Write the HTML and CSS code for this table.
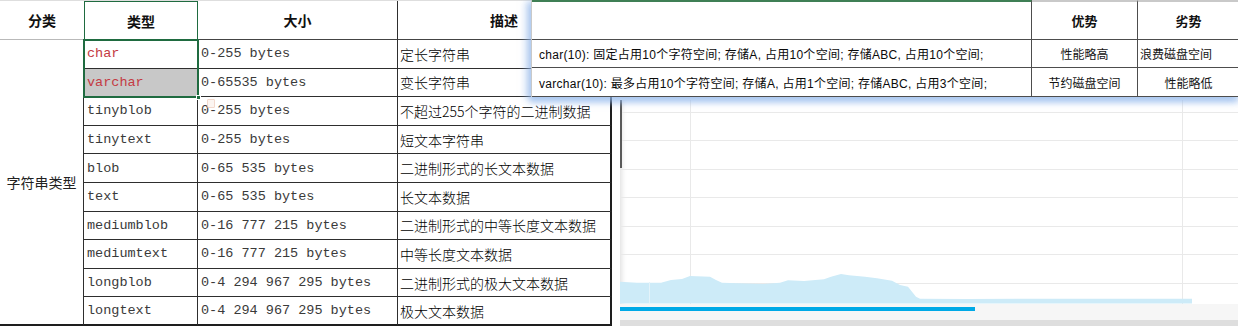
FILE: index.html
```html
<!DOCTYPE html>
<html lang="zh-CN">
<head>
<meta charset="utf-8">
<title>字符串类型</title>
<link rel="stylesheet" href="styles.css">
</head>
<body>
<div class="desk">
  <div class="sheet">
    <div class="c h h-cat">分类</div>
    <div class="c h h-type">类型</div>
    <div class="c h">大小</div>
    <div class="c h last">描述</div>

    <div class="c cat">字符串类型</div>

    <div class="c mono red">char</div><div class="c mono">0-255 bytes</div><div class="c cn last">定长字符串</div>
    <div class="c mono red picked">varchar</div><div class="c mono">0-65535 bytes</div><div class="c cn last">变长字符串</div>
    <div class="c mono">tinyblob</div><div class="c mono paste">0-255 bytes<span class="clip"></span></div><div class="c cn last">不超过255个字符的二进制数据</div>
    <div class="c mono">tinytext</div><div class="c mono">0-255 bytes</div><div class="c cn last">短文本字符串</div>
    <div class="c mono">blob</div><div class="c mono">0-65 535 bytes</div><div class="c cn last">二进制形式的长文本数据</div>
    <div class="c mono">text</div><div class="c mono">0-65 535 bytes</div><div class="c cn last">长文本数据</div>
    <div class="c mono">mediumblob</div><div class="c mono">0-16 777 215 bytes</div><div class="c cn last">二进制形式的中等长度文本数据</div>
    <div class="c mono">mediumtext</div><div class="c mono">0-16 777 215 bytes</div><div class="c cn last">中等长度文本数据</div>
    <div class="c mono">longblob</div><div class="c mono">0-4 294 967 295 bytes</div><div class="c cn last">二进制形式的极大文本数据</div>
    <div class="c mono">longtext</div><div class="c mono">0-4 294 967 295 bytes</div><div class="c cn last">极大文本数据</div>

    <div class="sel"><span class="handle"></span></div>
  </div>

  <div class="side">
    <div class="player">
      <svg class="frame" width="618" height="226" viewBox="0 0 618 226">
        <g stroke="#e9e9e9" stroke-width="1">
          <line x1="0" y1="12.5" x2="618" y2="12.5"/>
          <line x1="0" y1="40.5" x2="618" y2="40.5"/>
          <line x1="0" y1="69.5" x2="618" y2="69.5"/>
          <line x1="0" y1="97.5" x2="618" y2="97.5"/>
          <line x1="0" y1="126.5" x2="618" y2="126.5"/>
          <line x1="0" y1="154.5" x2="618" y2="154.5"/>
          <line x1="0" y1="183.5" x2="618" y2="183.5"/>
          <line x1="0" y1="212.5" x2="618" y2="212.5"/>
          <line x1="70.5" y1="0" x2="70.5" y2="226"/>
          <line x1="562.5" y1="0" x2="562.5" y2="226"/>
        </g>
        <rect x="0" y="204" width="618" height="16" fill="#f6f6f6"/>
        <polygon fill="#cdebf8" points="0,181.7 17,182.7 41,182.7 51,180 62,179 70,176 90,176.7 96,180 102,182.7 143,184 160,182.7 168,180.3 184,181 204,179.3 211,176.7 221,174 229,175.3 245,176.7 257,178.3 272,180.7 280,185 288,186.7 296,196.7 300,198.7 347,199 429,198.7 572,198.7 572,203.5 0,203.5"/>
        <line x1="29.5" y1="182" x2="29.5" y2="203" stroke="#e4f3fa" stroke-width="1"/>
        <rect x="0" y="207" width="355" height="4" fill="#00a9e6"/>
        <rect x="0" y="220" width="618" height="6" fill="#dedede"/>
        <rect x="0" y="0" width="2" height="68" fill="#5a5a5a"/>
      </svg>
    </div>
  </div>

  <div class="popup">
    <div class="p ph first"></div>
    <div class="p ph mid">优势</div>
    <div class="p ph end">劣势</div>

    <div class="p first txt">char(10): 固定占用10个字符空间; 存储A, 占用10个空间; 存储ABC, 占用10个空间;</div>
    <div class="p mid">性能略高</div>
    <div class="p end left">浪费磁盘空间</div>

    <div class="p first txt">varchar(10): 最多占用10个字符空间; 存储A, 占用1个空间; 存储ABC, 占用3个空间;</div>
    <div class="p mid">节约磁盘空间</div>
    <div class="p end">性能略低</div>
  </div>
</div>
</body>
</html>
```

FILE: styles.css
```css
* { box-sizing: border-box; }

html, body {
  margin: 0;
  padding: 0;
  background: #ffffff;
}

.desk {
  position: relative;
  width: 1238px;
  height: 326px;
  overflow: hidden;
  display: flex;
  background: #ffffff;
  font-family: "Noto Sans CJK SC", "Liberation Sans", sans-serif;
  color: #1e1e1e;
}

/* ---------- left spreadsheet ---------- */
.sheet {
  position: relative;
  flex: 0 0 612px;
  width: 612px;
  height: 326px;
  display: grid;
  grid-template-columns: 84px 114px 200px 214px;
  grid-template-rows: 39px repeat(10, 28.6px);
  border-top: 1px solid #dedede;
  align-content: start;
}

.c {
  display: flex;
  align-items: center;
  padding-left: 3px;
  border-right: 1px solid #2e2e2e;
  border-bottom: 1px solid #2e2e2e;
  font-size: 14px;
  white-space: nowrap;
  overflow: hidden;
}

.c.last { border-right: 2px solid #1e1e1e; }

.h {
  justify-content: center;
  padding-left: 0;
  font-weight: 700;
  font-size: 14px;
  color: #111;
  border-bottom: 1px solid #444;
}

.h-cat {
  border-right: none;
  border-bottom: 1px solid #b9b9b9;
}

.h-type {
  border: 1px solid #1f6b40;
  border-bottom: 1px solid #2d4a38;
}

.cat {
  grid-row: 2 / span 10;
  grid-column: 1;
  justify-content: center;
  padding-left: 0;
  border-bottom: 2px solid #1e1e1e;
  font-size: 14px;
  color: #222;
}

.mono {
  font-family: "Liberation Mono", "DejaVu Sans Mono", monospace;
  font-size: 13.5px;
  color: #3a3a3a;
}

.red { color: #c43a43; }

.picked { background: #c8c8c8; }

.cn {
  padding-left: 2px;
  font-size: 14px;
  font-weight: 300;
  color: #000000;
}

/* last row gets the thick bottom line */
.sheet > .c:nth-child(33),
.sheet > .c:nth-child(34),
.sheet > .c:nth-child(35) {
  border-bottom: 2px solid #1e1e1e;
}

.paste { position: relative; }

.clip {
  position: absolute;
  left: 9px;
  top: 2px;
  width: 8px;
  height: 9px;
  border: 1px solid #efc9b9;
  border-radius: 1px;
  background: #fcf1ec;
  opacity: 0.7;
}

.sel {
  position: absolute;
  left: 83px;
  top: 38px;
  width: 116px;
  height: 59px;
  border: 2px solid #1f6b40;
  pointer-events: none;
}

.handle {
  position: absolute;
  right: -4px;
  bottom: -4px;
  width: 5px;
  height: 5px;
  background: #1f6b40;
  border: 1px solid #ffffff;
}

/* ---------- right lower video frame ---------- */
.side {
  flex: 1;
  margin-left: 8px;
  padding-top: 100px;
}

.player {
  position: relative;
  width: 618px;
  height: 226px;
  background: #ffffff;
  box-shadow: inset 5px 0 5px -3px rgba(0, 0, 0, 0.12);
}

.frame { display: block; }

/* ---------- floating popup table ---------- */
.popup {
  position: absolute;
  left: 531px;
  top: 0;
  width: 707px;
  height: 97px;
  display: grid;
  grid-template-columns: 500px 106px 101px;
  grid-template-rows: 40px 28px 29px;
  background: #ffffff;
  border-left: 1px solid #c9c9c9;
  box-shadow: -4px 2px 7px 1px rgba(140, 178, 232, 0.55), 0 5px 6px 1px rgba(150, 188, 240, 0.55);
  font-family: "Liberation Sans", "Noto Sans CJK SC", sans-serif;
  font-size: 12px;
  color: #141414;
}

.p {
  display: flex;
  align-items: center;
  justify-content: center;
  white-space: nowrap;
  border-bottom: 1px solid #4d4d4d;
  overflow: hidden;
}

.p.first { justify-content: flex-start; padding-left: 7px; border-right: 1px solid #4d4d4d; }
.p.mid { border-right: 1px solid #4d4d4d; }
.p.left { justify-content: flex-start; padding-left: 2px; }

.txt {
  font-size: 12px;
  letter-spacing: 0.28px;
  color: #0a0a0a;
}

.ph {
  border-top: 2px solid #c9c9c9;
  font-family: "Noto Sans CJK SC", sans-serif;
  font-weight: 700;
  font-size: 13px;
  color: #111;
}

.ph.first { border-top: 2px solid #3f7f55; }
```
